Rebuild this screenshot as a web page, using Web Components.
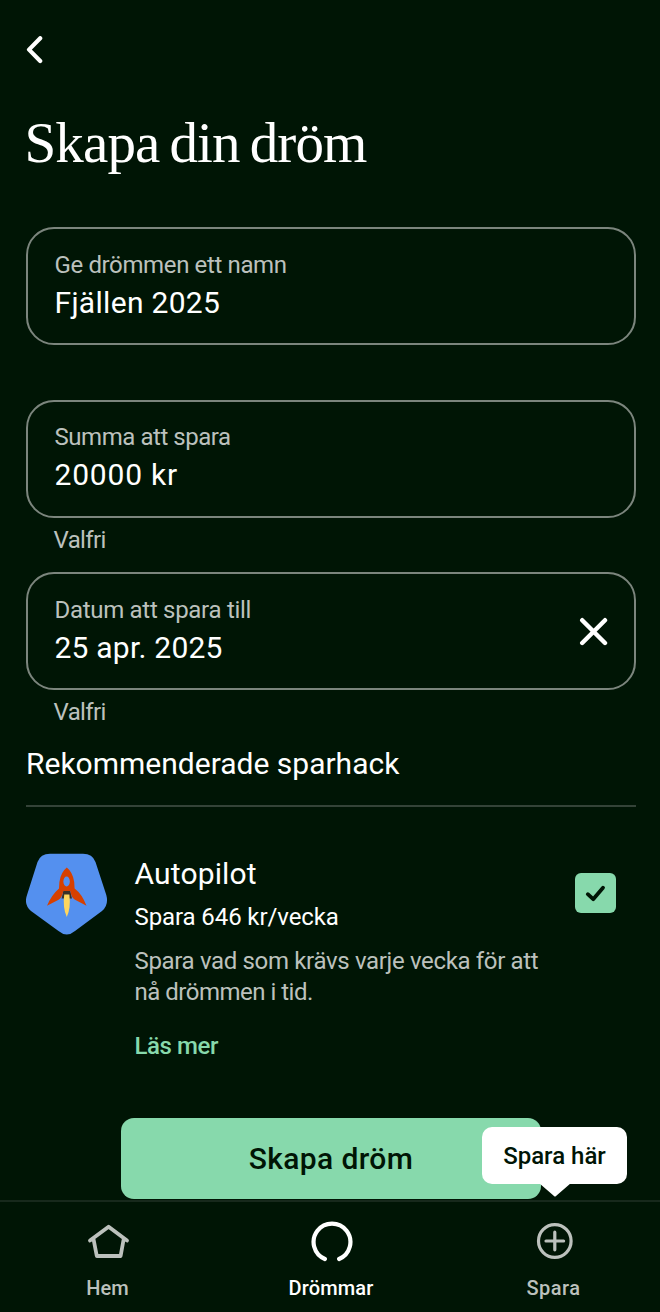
<!DOCTYPE html>
<html lang="sv">
<head>
<meta charset="utf-8">
<title>Skapa din dröm</title>
<style>
  html, body { margin: 0; padding: 0; background: #001505; }
  body { width: 660px; height: 1312px; overflow: hidden; }
</style>
</head>
<body>
<dream-screen>
  <back-button></back-button>
  <page-title>Skapa din dröm</page-title>
  <text-field style="margin-top:54px;--label-ls:-.37px;--value-ls:.3px">
    <span slot="label">Ge drömmen ett namn</span>Fjällen 2025
  </text-field>
  <text-field style="margin-top:54.5px;--label-ls:-.45px;--value-ls:.8px">
    <span slot="label">Summa att spara</span>20000 kr
    <span slot="hint">Valfri</span>
  </text-field>
  <text-field clearable style="margin-top:17.5px;--label-ls:-.3px;--value-ls:.22px">
    <span slot="label">Datum att spara till</span>25 apr. 2025
    <span slot="hint">Valfri</span>
  </text-field>
  <section-heading>Rekommenderade sparhack</section-heading>
  <hack-row>
    <rocket-badge slot="icon"></rocket-badge>
    <span slot="title">Autopilot</span>
    <span slot="amount">Spara 646 kr/vecka</span>
    <span slot="text">Spara vad som krävs varje vecka för att<br><span style="letter-spacing:-.5px">nå drömmen i tid.</span></span>
    <span slot="link">Läs mer</span>
    <check-box slot="control"></check-box>
  </hack-row>
  <primary-button>Skapa dröm</primary-button>
  <nav-bar slot="nav">
    <nav-item icon="home" style="width:215px">Hem</nav-item>
    <nav-item icon="ring" active style="width:232px;--ls:.15px">Drömmar</nav-item>
    <nav-item icon="plus" style="width:213px;--ls:.5px">Spara<tool-tip slot="tip">Spara här</tool-tip></nav-item>
  </nav-bar>
</dream-screen>

<script>
const define = (name, html, setup) => {
  const template = document.createElement('template');
  template.innerHTML = html;
  customElements.define(name, class extends HTMLElement {
    constructor() {
      super();
      this.attachShadow({ mode: 'open' }).append(template.content.cloneNode(true));
    }
    connectedCallback() { if (setup) setup(this, this.shadowRoot); }
  });
};

define('dream-screen', `<style>
  :host { display: flex; flex-direction: column; box-sizing: border-box; width: 660px; height: 1312px;
    background: #001505; color: #fff; font-family: Roboto, "Liberation Sans", sans-serif; }
  main { flex: 1; display: flex; flex-direction: column; padding: 36px 24px 0 26px; }
</style><main><slot></slot></main><slot name="nav"></slot>`);

define('back-button', `<style>
  :host { display: block; width: 20px; height: 28px; }
  svg { display: block; }
</style><svg width="20" height="28" viewBox="0 0 20 28" fill="none" stroke="#fff" stroke-width="4.2" stroke-linecap="round" stroke-linejoin="round"><path d="M14.200 2.200 3 13.600 14.200 25"/></svg>`);

define('page-title', `<style>
  :host { display: block; margin-top: 49px; height: 60px; line-height: 60px; white-space: nowrap;
    font-family: "Liberation Serif", serif; font-size: 57px; letter-spacing: -.85px; word-spacing: -3.500px; text-indent: -1.500px; }
</style><slot></slot>`);

define('text-field', `<style>
  :host { display: block; }
  .box { display: flex; align-items: center; justify-content: space-between; box-sizing: border-box;
    height: 118px; padding: 0 26px 0 26.500px; border: 2px solid #7b857d; border-radius: 28px; }
  .copy { display: flex; flex-direction: column; gap: 4px; padding-bottom: 1px; white-space: nowrap; }
  .label { font-size: 24px; line-height: 30px; height: 30px; color: #bcc1bd; letter-spacing: var(--label-ls); }
  .value { font-size: 30px; line-height: 38px; height: 38px; letter-spacing: var(--value-ls); }
  .hint { padding: 7px 0 0 27.500px; height: 30px; font-size: 24px; line-height: 30px; color: #bcc1bd; letter-spacing: -.6px; }
  svg, .hint { display: none; }
  :host([clearable]) svg { display: block; }
</style><div class="box"><div class="copy"><div class="label"><slot name="label"></slot></div><div class="value"><slot></slot></div></div>
<svg width="29" height="29" viewBox="0 0 29 29" fill="none" stroke="#fff" stroke-width="4.400" stroke-linecap="round"><path d="M3.200 3.200 26 26M26 3.200 3.200 26"/></svg></div>
<div class="hint"><slot name="hint"></slot></div>`, (host, root) => {
  if (host.querySelector('[slot=hint]')) root.querySelector('.hint').style.display = 'block';
});

define('section-heading', `<style>
  :host { display: block; box-sizing: border-box; height: 62px; margin-top: 18px;
    border-bottom: 2px solid #344338; font-size: 30px; line-height: 38px; white-space: nowrap; }
</style><slot></slot>`);

define('hack-row', `<style>
  :host { display: grid; grid-template-columns: 108.500px 1fr auto; align-items: start; margin-top: 46px; padding-right: 20px; white-space: nowrap; }
  .copy { display: flex; flex-direction: column; }
  .title { font-size: 30px; line-height: 38px; margin-top: 2px; letter-spacing: .15px; }
  .amount { font-size: 24px; line-height: 30px; margin-top: 9px; letter-spacing: -.1px; }
  .text { font-size: 24px; line-height: 30.500px; margin-top: 14px; color: #bcc1bd; letter-spacing: -.34px; }
  .link { font-size: 24px; line-height: 30px; margin-top: 24px; color: #87d9ac; font-weight: 500; letter-spacing: -.42px; }
  .control { padding-top: 19.500px; }
</style><slot name="icon"></slot><div class="copy"><div class="title"><slot name="title"></slot></div><div class="amount"><slot name="amount"></slot></div>
<div class="text"><slot name="text"></slot></div><div class="link"><slot name="link"></slot></div></div><div class="control"><slot name="control"></slot></div>`);

define('rocket-badge', `<style>:host { display: block; width: 82px; height: 82px; } svg { display: block; }</style>
<svg width="82" height="82" viewBox="0 0 82 82">
  <path fill="#5490ef" d="M24 .8H57Q66.500 .8 69.500 9L80.300 42Q83 52 76 58L49 78Q40.800 85 32.500 78L5 58Q-2 52 .7 43L11.500 9Q14.500 .8 24 .8Z"/>
  <path fill="#393029" d="M37.500 37h6.600l1.900 8.500H35.600Z"/>
  <path fill="#d64000" d="M40.800 14.600Q46.800 19.300 48.200 29L48.600 35.500Q56 41 60.500 52.800L49 46.800Q45.500 45 44.300 38H37.300Q36 45 32.600 46.800L21 52.800Q25.500 42 33 35.500L33.400 29Q34.800 19.300 40.800 14.600Z"/>
  <ellipse cx="40.600" cy="28.500" rx="3.200" ry="5" fill="#5490ef"/>
  <path fill="#ffd65e" d="M38.200 41.500h5.200Q45 55 40.800 64Q36.600 55 38.200 41.500Z"/>
</svg>`);

define('check-box', `<style>
  :host { display: grid; place-items: center; width: 41px; height: 40.500px; border-radius: 6px; background: #87d9ac; }
</style><svg width="41" height="41" viewBox="0 0 41 41" fill="none" stroke="#001505" stroke-width="3.800" stroke-linecap="round" stroke-linejoin="round"><path d="M12.800 21.200 18.200 26.200 28 14.800"/></svg>`);

define('primary-button', `<style>
  :host { display: grid; place-items: center; box-sizing: border-box; width: 420px; height: 81px; margin: 57px 0 0 95px; border-radius: 13px;
    background: #87d9ac; color: #001505; font-size: 30px; font-weight: 500; letter-spacing: .38px; }
</style><slot></slot>`);

define('nav-bar', `<style>
  :host { display: flex; box-sizing: border-box; height: 112px; border-top: 2px solid #17291c; }
</style><slot></slot>`);

const icons = {
  home: '<path d="M4 20.600 22.600 6.700 41 20.600M7.600 19.500 10.800 36H34.600L37.600 19.500"/>',
  ring: '<path d="M15.900 39A18.400 18.400 0 1 1 30.100 39" stroke-width="4.200"/>',
  plus: '<circle cx="22.800" cy="21" r="16.300" stroke-width="3.200"/><path d="M22.800 12.200v17.600M14 21h17.600" stroke-width="3.200"/>'
};
define('nav-item', `<style>
  :host { position: relative; display: flex; flex-direction: column; align-items: center; color: #bcc1bd;
    font-size: 20px; line-height: 26px; font-weight: 500; letter-spacing: var(--ls, 0); padding-top: 18px; box-sizing: border-box; }
  :host([active]) { color: #fff; }
  svg { display: block; margin-bottom: 11px; }
</style><svg width="44" height="44" viewBox="0 0 44 44" fill="none" stroke="currentColor" stroke-width="3.800" stroke-linecap="round" stroke-linejoin="round"></svg><div><slot></slot></div><slot name="tip"></slot>`,
(host, root) => { root.querySelector('svg').innerHTML = icons[host.getAttribute('icon')]; });

define('tool-tip', `<style>
  :host { position: absolute; top: -75px; left: 35px; display: grid; place-items: center; width: 145px; height: 57px; border-radius: 10px;
    background: #fff; color: #001505; font-size: 24px; line-height: 30px; letter-spacing: 0; white-space: nowrap; }
  svg { position: absolute; top: 56px; left: 57px; }
</style><slot></slot><svg width="32" height="14" viewBox="0 0 32 14"><path fill="#fff" d="M0 0H32L17 13Q16 14 15 13Z"/></svg>`);
</script>
</body>
</html>
